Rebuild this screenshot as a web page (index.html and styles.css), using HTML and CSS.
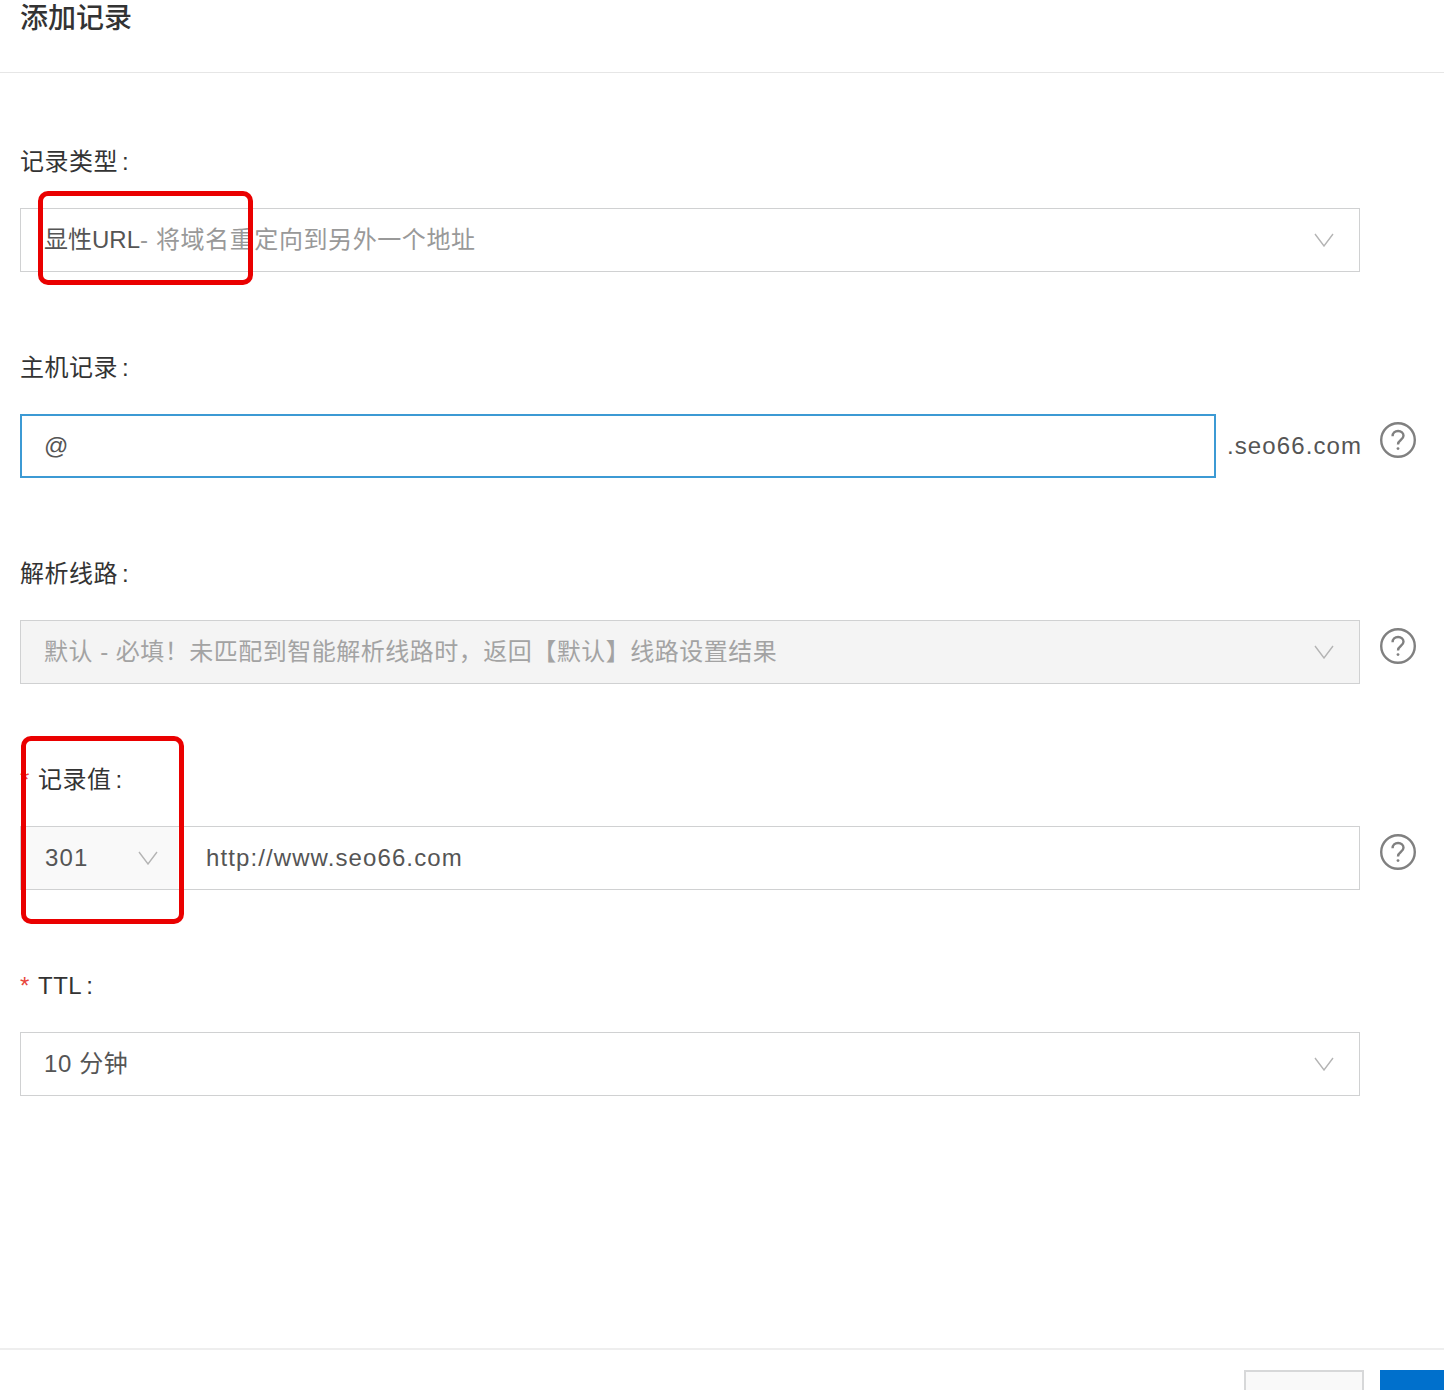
FILE: index.html
```html
<!DOCTYPE html>
<html lang="zh-CN">
<head>
<meta charset="utf-8">
<title>添加记录</title>
<link rel="stylesheet" href="styles.css">
</head>
<body>
<div class="dialog">
  <header class="dialog-head"><h1 class="dialog-title">添加记录</h1></header>
  <main class="form">
    <section class="field">
      <div class="label">记录类型<span class="colon">:</span></div>
      <div class="row">
        <div class="select control">
          <span class="value"><span class="strong">显性URL</span><span class="muted">- 将域名重定向到另外一个地址</span></span>
          <svg class="chev" viewBox="0 0 20 14"><path d="M1 1l9 12 9-12"/></svg>
        </div>
      </div>
    </section>
    <section class="field">
      <div class="label">主机记录<span class="colon">:</span></div>
      <div class="row">
        <div class="control split">
          <div class="input focus"><span class="value latin">@</span></div>
          <span class="suffix latin">.seo66.com</span>
        </div>
        <svg class="help" viewBox="0 0 36 36"><circle cx="18" cy="18" r="16.8"/><path d="M12.6 14.2c0-3.2 2.3-5.2 5.5-5.2s5.4 1.9 5.4 4.8c0 4.3-5.5 4.2-5.5 8.6"/><circle class="dot" cx="18" cy="26.6" r="1.4"/></svg>
      </div>
    </section>
    <section class="field">
      <div class="label">解析线路<span class="colon">:</span></div>
      <div class="row">
        <div class="select control disabled">
          <span class="value">默认 - 必填！未匹配到智能解析线路时，返回【默认】线路设置结果</span>
          <svg class="chev" viewBox="0 0 20 14"><path d="M1 1l9 12 9-12"/></svg>
        </div>
        <svg class="help" viewBox="0 0 36 36"><circle cx="18" cy="18" r="16.8"/><path d="M12.6 14.2c0-3.2 2.3-5.2 5.5-5.2s5.4 1.9 5.4 4.8c0 4.3-5.5 4.2-5.5 8.6"/><circle class="dot" cx="18" cy="26.6" r="1.4"/></svg>
      </div>
    </section>
    <section class="field">
      <div class="label"><span class="req">*</span>记录值<span class="colon">:</span></div>
      <div class="row">
        <div class="control group">
          <div class="mini-select"><span class="value latin">301</span><svg class="chev" viewBox="0 0 20 14"><path d="M1 1l9 12 9-12"/></svg></div>
          <span class="value latin url">http://www.seo66.com</span>
        </div>
        <svg class="help" viewBox="0 0 36 36"><circle cx="18" cy="18" r="16.8"/><path d="M12.6 14.2c0-3.2 2.3-5.2 5.5-5.2s5.4 1.9 5.4 4.8c0 4.3-5.5 4.2-5.5 8.6"/><circle class="dot" cx="18" cy="26.6" r="1.4"/></svg>
      </div>
    </section>
    <section class="field">
      <div class="label"><span class="req">*</span>TTL<span class="colon">:</span></div>
      <div class="row">
        <div class="select control">
          <span class="value">10 分钟</span>
          <svg class="chev" viewBox="0 0 20 14"><path d="M1 1l9 12 9-12"/></svg>
        </div>
      </div>
    </section>
  </main>
  <footer class="dialog-foot">
    <button class="btn btn-default" type="button"></button>
    <button class="btn btn-primary" type="button"></button>
  </footer>
  <div class="mark mark-type"></div>
  <div class="mark mark-value"></div>
</div>
</body>
</html>
```
FILE: styles.css
```css
* { box-sizing: border-box; }
html, body { margin: 0; padding: 0; background: #fff; }
body { font-family: "Liberation Sans", "Noto Sans CJK SC", sans-serif; color: #333; }
.dialog { position: relative; width: 1444px; height: 1390px; overflow: hidden; display: flex; flex-direction: column; }
.dialog-head { height: 73px; border-bottom: 1px solid #e6e6e6; padding-left: 20px; padding-top: 1px; flex: none; }
.dialog-title { margin: 0; font-size: 28px; line-height: 36px; font-weight: 500; color: #333; }
.form { padding: 64px 0 0 20px; flex: 1; }
.field { height: 206px; }
.label { height: 71px; padding-top: 1px; font-size: 24px; line-height: 48px; letter-spacing: 0.5px; color: #333; display: flex; }
.colon { margin-left: 4px; }
.req { width: 18px; color: #e8453c; flex: none; }
.row { display: flex; gap: 20px; }
.control { width: 1340px; height: 64px; flex: none; }
.value { font-size: 24px; color: #555; white-space: nowrap; }
.latin { letter-spacing: 1.1px; }
.select { border: 1px solid #d0d1d2; padding: 0 25px 0 23px; display: flex; align-items: center; justify-content: space-between; }
.select .value { padding-bottom: 6px; letter-spacing: 0.6px; }
.select .strong { color: #555; letter-spacing: 0; }
.muted { color: #999; }
.disabled { background: #f4f4f4; }
.select.disabled .value { color: #a3a3a3; letter-spacing: 0.5px; }
.chev { width: 20px; height: 14px; flex: none; fill: none; stroke: #b4b4b4; stroke-width: 1.4; }
.split { display: flex; align-items: center; gap: 11px; }
.input { width: 1196px; height: 64px; border: 1px solid #d0d1d2; padding: 0 24px; display: flex; align-items: center; flex: none; }
.focus { border: 2px solid #3c9ad4; padding-left: 22px; }
.suffix { font-size: 24px; color: #555; white-space: nowrap; }
.help { width: 36px; height: 36px; margin-top: 8px; flex: none; fill: none; stroke: #808080; stroke-width: 2.4; }
.help .dot { fill: #808080; stroke: none; }
.group { border: 1px solid #d0d1d2; display: flex; align-items: center; }
.mini-select { width: 157px; height: 62px; background: #f9f9f9; padding: 0 20px 0 24px; display: flex; align-items: center; justify-content: space-between; flex: none; }
.url { margin-left: 28px; }
.dialog-foot { height: 42px; flex: none; border-top: 2px solid #eee; padding: 20px 0 0 1244px; display: flex; gap: 16px; }
.btn { display: block; width: 120px; height: 64px; padding: 0; flex: none; border-radius: 0; }
.btn-default { border: 2px solid #d7d8d9; background: #f9f9f9; }
.btn-primary { border: 0; background: #0070cc; }
.mark { position: absolute; border: 5px solid #ea0000; border-radius: 10px; pointer-events: none; }
.mark-type { left: 38px; top: 191px; width: 215px; height: 94px; }
.mark-value { left: 21px; top: 736px; width: 163px; height: 188px; }
```
